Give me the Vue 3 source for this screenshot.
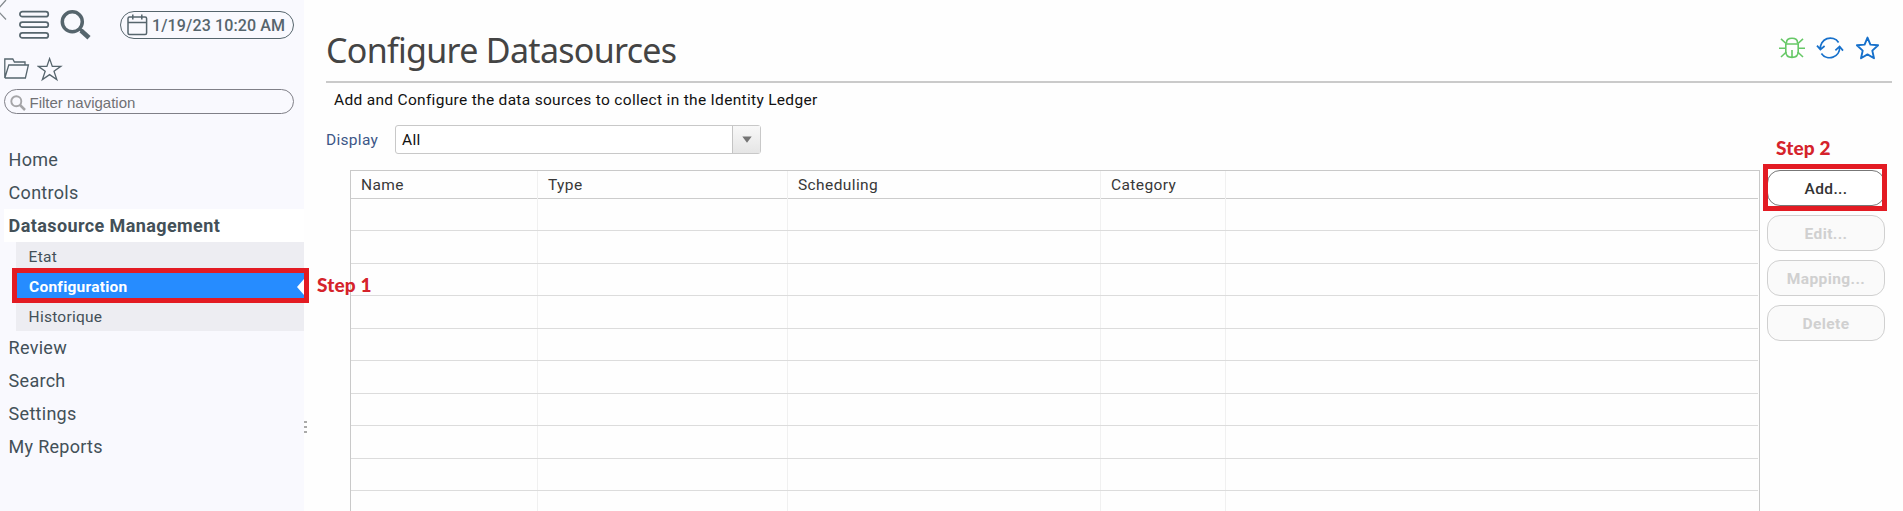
<script setup>
const topNav = ['Home', 'Controls']
const subNav = ['Etat', 'Configuration', 'Historique']
const bottomNav = ['Review', 'Search', 'Settings', 'My Reports']
const columns = ['Name', 'Type', 'Scheduling', 'Category', '']
const rows = 10
const actions = ['Edit...', 'Mapping...', 'Delete']
</script>

<template>
  <div class="app">
    <aside class="sidebar">
      <svg class="back" width="8" height="22" viewBox="0 0 8 22" fill="none" stroke="#858b8f" stroke-width="1.3"><path d="M6 0L-3 10L6 19.5" /></svg>
      <div class="tools">
        <svg width="32" height="30" viewBox="0 0 32 30" fill="none" stroke="#56656d" stroke-width="1.7">
          <rect x="1.9" y="2.7" width="28.4" height="5" rx="2.5" />
          <rect x="1.9" y="13.2" width="28.4" height="5" rx="2.5" />
          <rect x="1.9" y="23.9" width="28.4" height="5" rx="2.5" />
        </svg>
        <svg class="magnifier" width="32" height="32" viewBox="0 0 32 32" fill="none" stroke="#56656d">
          <circle cx="12.3" cy="12.8" r="10" stroke-width="3.5" />
          <path d="M18.8 19L22 22" stroke-width="3" />
          <path d="M21 21.5L29 28.8" stroke-width="4.6" />
        </svg>
        <div class="date">
          <svg width="21" height="22" viewBox="0 0 21 22" fill="none" stroke="#56656d" stroke-width="1.5">
            <rect x="1" y="3" width="18.6" height="17.4" rx="1.5" />
            <path d="M1 8.5H19.6M5.8 .5V5.5M14.8 .5V5.5" />
          </svg>
          <span>1/19/23 10:20 AM</span>
        </div>
      </div>
      <div class="shortcuts">
        <svg width="26" height="22" viewBox="0 0 26 22" fill="none" stroke="#56656d" stroke-width="1.3">
          <path d="M.8 20V1H8.8L10.4 4H21V7M.8 20L4.8 7H24.4L21.4 20H.8" />
        </svg>
        <svg width="26" height="25" viewBox="0 0 26 25" fill="none" stroke="#56656d" stroke-width="1.3">
          <path d="M12.6 1.6L15.3 9.4H23.8L17 14.3L19.8 22.6L12.6 17.6L5.4 22.6L8.2 14.3L1.4 9.4H9.9Z" />
        </svg>
      </div>
      <div class="filter">
        <svg width="16" height="16" viewBox="0 0 16 16" fill="none" stroke="#a5a5a8"><circle cx="6.3" cy="6.3" r="5" stroke-width="1.9" /><path d="M10 10L15 15" stroke-width="2.5" /></svg>
        <span>Filter navigation</span>
      </div>
      <nav>
        <div v-for="n in topNav" :key="n" class="item">{{ n }}</div>
        <div class="item open">Datasource Management</div>
        <div class="sub">
          <div v-for="n in subNav" :key="n" class="subitem" :class="{ active: n === 'Configuration' }">{{ n }}</div>
          <div class="mark mark-nav"></div>
        </div>
        <div v-for="n in bottomNav" :key="n" class="item">{{ n }}</div>
      </nav>
      <div class="grip"><i></i><i></i><i></i></div>
      <b class="step step-one">Step 1</b>
    </aside>

    <main>
      <header>
        <h1>Configure Datasources</h1>
        <div class="icons">
          <svg width="26" height="24" viewBox="0 0 26 24" fill="none" stroke="#66c866" stroke-width="1.6">
            <path d="M7.5 7.5V6.5Q7.5 2.2 13 2.2Q18.5 2.2 18.5 6.5V7.5" />
            <path d="M6.8 8H19.2V15.5Q19.2 21.4 13 21.4Q6.8 21.4 6.8 15.5Z M13 14V21.4" />
            <path d="M7 7.5L2 2.8M19 7.5L24 2.8M0 12.3H7M19 12.3H26M7.3 16L2 21M18.7 16L24 21" />
          </svg>
          <svg width="28" height="24" viewBox="0 0 28 24" fill="none" stroke="#1670cb" stroke-width="1.7">
            <path d="M22.6 6.4A10 10 0 0 0 4.4 13M1 9.6L4.4 13.6L8.6 10" />
            <path d="M5.4 17.4A10 10 0 0 0 23.6 11M19.4 14.4L23.6 10.4L27 14.6" />
          </svg>
          <svg width="26" height="25" viewBox="0 0 26 25" fill="none" stroke="#1670cb" stroke-width="1.9" stroke-linejoin="round">
            <path d="M12.5 1.6L15.4 8.6L23.1 9.2L17.3 14.6L19 22.2L12.5 18.4L6 22.2L7.7 14.6L1.9 9.2L9.6 8.6Z" />
          </svg>
        </div>
      </header>
      <p>Add and Configure the data sources to collect in the Identity Ledger</p>
      <div class="display">
        <label>Display</label>
        <div class="select">
          <span>All</span>
          <div class="arrow"><svg width="10" height="7" viewBox="0 0 10 7"><path d="M.3 .5H9.7L5 6.7Z" fill="#747474" /></svg></div>
        </div>
      </div>
      <div class="content">
        <div class="table">
          <div class="row head"><div v-for="(c, i) in columns" :key="i">{{ c }}</div></div>
          <div v-for="r in rows" :key="r" class="row" :class="{ tall: r % 2 === 0 }"><div v-for="(c, i) in columns" :key="i"></div></div>
        </div>
        <div class="actions">
          <div class="btn primary">Add...</div>
          <div v-for="a in actions" :key="a" class="btn">{{ a }}</div>
          <div class="mark mark-add"></div>
          <b class="step step-two">Step 2</b>
        </div>
      </div>
    </main>
  </div>
</template>

<style>
body { margin: 0; background: #fefefe; }
</style>

<style scoped>
* { box-sizing: border-box; }
svg { display: block; flex: none; }
.app { display: flex; width: 1903px; height: 511px; overflow: hidden; background: #fefefe; font-family: Roboto, "Liberation Sans", sans-serif; white-space: nowrap; }
.sidebar { position: relative; width: 304px; height: 511px; flex: none; background: #f9f9fe; padding-top: 9px; color: #435058; }
.back { position: absolute; left: 0; top: 0; }
.tools { display: flex; height: 32px; padding-left: 18px; align-items: flex-start; }
.magnifier { margin-left: 10px; }
.date { display: flex; align-items: center; width: 174px; height: 28px; margin: 2px 0 0 28px; border: 1px solid #56656d; border-radius: 14px; padding-left: 6px; color: #56656d; font-size: 16px; font-weight: 500; letter-spacing: .13px; }
.date span { margin-left: 4px; padding-top: 1px; }
.shortcuts { display: flex; gap: 7px; height: 48px; padding: 16px 0 0 4px; align-items: flex-start; }
.shortcuts svg:first-child { margin-top: 1px; }
.filter { display: flex; align-items: center; width: 290px; height: 25px; margin-left: 4px; border: 1px solid #808088; border-radius: 13px; padding: 2px 0 0 5px; font: 15px "Liberation Sans", Arial, sans-serif; color: #707074; }
.filter span { margin-left: 3.5px; }
nav { padding-top: 29px; }
.item { height: 33px; line-height: 33px; padding-left: 4.6px; margin-left: 4px; font-size: 18px; letter-spacing: .28px; }
.item.open { background: #fff; font-weight: 700; letter-spacing: .4px; }
.sub { position: relative; margin-left: 16px; height: 89px; background: #ededf2; }
.subitem { position: relative; height: 30px; line-height: 30px; padding-left: 12.6px; font-size: 15.5px; letter-spacing: .25px; }
.subitem.active { background: #268cff; color: #fff; font-weight: 700; padding-left: 13px; letter-spacing: .25px; }
.subitem.active::after { content: ""; position: absolute; right: 0; top: 7px; border: 8px solid transparent; border-left: 0; border-right: 7px solid #fff; }
.mark { position: absolute; border: 5px solid #e31b23; }
.mark-nav { left: -4px; top: 26px; width: 297px; height: 35px; }
.grip { position: absolute; left: 304px; top: 421px; display: grid; gap: 3px; }
.grip i { width: 3px; height: 2px; background: #aaa; }
.step { position: absolute; color: #d5232b; font: 900 19px/20px Lato, "Open Sans", sans-serif; letter-spacing: .15px; z-index: 2; }
.step-one { left: 317px; top: 275px; }
.step-two { left: 9px; top: -32px; }
main { flex: 1; padding-left: 22px; }
header { display: flex; justify-content: space-between; width: 1566px; height: 83px; border-bottom: 2px solid #cacaca; }
h1 { margin: 27px 0 0; font: 400 34px/46px "Noto Sans", "Open Sans", sans-serif; letter-spacing: -.7px; color: #444; }
.icons { display: flex; gap: 11px; padding: 36px 11px 0 0; align-items: flex-start; }
p { margin: 7px 0 0 8px; font-size: 15.5px; line-height: 20px; letter-spacing: .31px; color: #111; }
.display { display: flex; align-items: center; margin-top: 15px; height: 28px; font-size: 15.5px; letter-spacing: .3px; color: #3c5687; }
.display label { width: 69px; padding-top: 1px; }
.select { display: flex; justify-content: space-between; width: 366px; height: 29px; border: 1px solid #c8c8c8; border-radius: 3px; background: #fff; color: #111; line-height: 28px; padding-left: 6px; }
.arrow { width: 28px; border-left: 1px solid #c4c4c4; background: linear-gradient(#f8f8f8, #e5e5e5); padding: 10px 0 0 9px; }
.content { display: flex; margin: 17px 0 0 24px; gap: 7px; }
.table { width: 1410px; border: 1px solid #c9c9c9; border-bottom: 0; padding-right: 1px; }
.row { display: grid; grid-template-columns: 187px 250px 313px 125px 1fr; height: 32px; border-bottom: 1px solid #dcdcdc; }
.row.tall { height: 33px; }
.row > div { border-right: 1px solid #f0f0f0; padding-left: 10px; }
.row > div:last-child { border-right: 0; }
.head { height: 28px; line-height: 28px; border-color: #ccc; font-size: 15.5px; letter-spacing: .4px; color: #383838; }
.actions { position: relative; width: 118px; display: flex; flex-direction: column; gap: 9px; }
.btn { height: 36px; border: 1px solid #d0d0d0; border-radius: 13px; background: #fafafa; color: #d0d0d0; font-size: 15.5px; font-weight: 700; line-height: 36px; letter-spacing: .4px; text-align: center; }
.primary { background: #fff; border-color: #777; color: #333; font-weight: 500; }
.mark-add { left: -4px; top: -6px; width: 124px; height: 47px; }
</style>
